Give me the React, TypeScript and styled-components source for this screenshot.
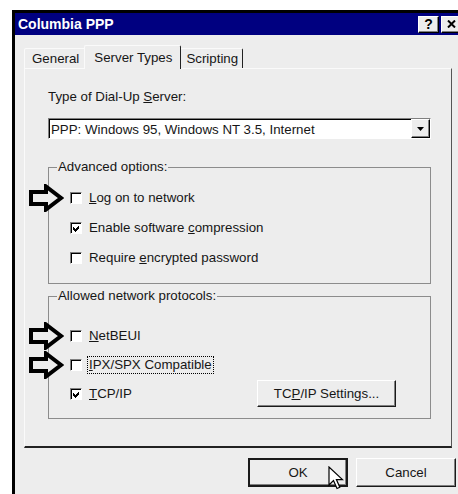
import styled, { createGlobalStyle } from "styled-components"

const GlobalStyle = createGlobalStyle`
  html, body {
    margin: 0;
    padding: 0;
    background: #fff;
    overflow: hidden;
  }
  body {
    font-family: "Liberation Sans", Arial, sans-serif;
    font-size: 13.3px;
    color: #161616;
  }
`

const face = "#ededed"

const Page = styled.div`
  padding: 10px 0 0 12px;
  width: 480px;
`

const Window = styled.div`
  width: 449px;
  height: 490px;
  border-top: 3px solid #000;
  border-left: 3px solid #000;
  background: ${face};
  display: flex;
  flex-direction: column;
`

const TitleBar = styled.div`
  height: 22px;
  flex: none;
  background: #000080;
  color: #fff;
  display: flex;
  align-items: center;
  justify-content: space-between;
  padding: 0 2px 0 3px;
  font-size: 14px;
  font-weight: bold;
`

const TitleButtons = styled.div`
  display: flex;
  gap: 2px;
`

const TitleButton = styled.div`
  width: 21px;
  height: 17px;
  box-sizing: border-box;
  background: ${face};
  color: #000;
  border-top: 1px solid #fff;
  border-left: 1px solid #fff;
  border-right: 1px solid #000;
  border-bottom: 1px solid #000;
  box-shadow: inset -1px -1px #808080;
  display: flex;
  align-items: center;
  justify-content: center;
  font-size: 14px;
  font-weight: bold;
  line-height: 1;
`

const Body = styled.div`
  padding: 10px 0 0 9px;
  display: flex;
  flex-direction: column;
`

const TabRow = styled.div`
  display: flex;
  align-items: flex-end;
  height: 23px;
`

const Tab = styled.div<{ $active?: boolean; $last?: boolean }>`
  position: relative;
  z-index: ${p => (p.$active ? 1 : 0)};
  height: ${p => (p.$active ? 24 : 20)}px;
  margin: ${p => (p.$active ? "0 -2px -1px -2px" : "0")};
  padding: ${p => (p.$active ? "0 8px 1px 9px" : p.$last ? "0 4px 0 6px" : "0 6px 0 7px")};
  box-sizing: border-box;
  display: flex;
  align-items: center;
  background: ${face};
  border-top: 1px solid #fafafa;
  border-left: 1px solid #fafafa;
  border-right: 1px solid ${p => (p.$active || p.$last ? "#222" : "transparent")};
  border-top-left-radius: 2px;
  border-top-right-radius: 2px;
`

const Panel = styled.div`
  width: 428px;
  height: 380px;
  box-sizing: border-box;
  border-top: 1px solid #fafafa;
  border-left: 1px solid #fafafa;
  border-right: 1px solid #555;
  border-bottom: 2px solid #222;
  padding: 20px 0 0 23px;
`

const FieldLabel = styled.div`
  line-height: 16px;
`

const Select = styled.div`
  margin-top: 13px;
  width: 383px;
  height: 21px;
  box-sizing: border-box;
  background: #fff;
  border-top: 1px solid #808080;
  border-left: 1px solid #808080;
  border-right: 1px solid #fff;
  border-bottom: 1px solid #fff;
  box-shadow: inset 1px 1px #000;
  display: flex;
  align-items: center;
  padding-left: 2px;
`

const SelectText = styled.span`
  flex: 1;
  padding-top: 1px;
`

const DropButton = styled.div`
  width: 19px;
  height: 19px;
  box-sizing: border-box;
  background: ${face};
  border-top: 1px solid #fff;
  border-left: 1px solid #fff;
  border-right: 1px solid #000;
  border-bottom: 1px solid #000;
  box-shadow: inset -1px -1px #808080;
  display: flex;
  align-items: center;
  justify-content: center;
`

const Group = styled.fieldset<{ $gap: number; $top: number }>`
  margin: ${p => p.$gap}px 0 0 0;
  padding: ${p => p.$top}px 0 10px 8px;
  width: 383px;
  box-sizing: border-box;
  border: 1px solid #8c8c8c;
  min-inline-size: auto;
`

const Legend = styled.legend`
  padding: 0 1px;
  line-height: 16px;
`

const Row = styled.div<{ $h: number }>`
  position: relative;
  height: ${p => p.$h}px;
  margin-left: 13px;
  display: flex;
  align-items: center;
`

const Box = styled.span`
  width: 12px;
  height: 12px;
  flex: none;
  box-sizing: border-box;
  background: #fff;
  border-top: 1px solid #808080;
  border-left: 1px solid #808080;
  border-right: 1px solid #fff;
  border-bottom: 1px solid #fff;
  box-shadow: inset 1px 1px #000;
  display: flex;
  align-items: center;
  justify-content: center;
`

const CheckText = styled.span<{ $focus?: boolean }>`
  margin-left: 6px;
  padding: 0 1px;
  line-height: 16px;
  outline: ${p => (p.$focus ? "1px dotted #000" : "none")};
`

const Marker = styled.svg`
  position: absolute;
  left: -42px;
  top: 50%;
  transform: translateY(-50%);
`

const Button = styled.div<{ $w: number; $h: number; $default?: boolean }>`
  position: relative;
  width: ${p => p.$w}px;
  height: ${p => p.$h}px;
  box-sizing: border-box;
  background: ${face};
  display: flex;
  align-items: center;
  justify-content: center;
  border: ${p => (p.$default ? "2px solid #1a1a1a" : "1px solid")};
  border-color: ${p => (p.$default ? "#1a1a1a" : "#fff #1a1a1a #1a1a1a #fff")};
  box-shadow: inset -1px -1px #808080;
`

const SettingsButton = styled(Button)`
  margin-left: auto;
  margin-right: 34px;
`

const Footer = styled.div`
  display: flex;
  justify-content: flex-end;
  gap: 8px;
  padding: 10px 8px 0 0;
`

const Pointer = styled.svg`
  position: absolute;
  left: 78px;
  top: 6px;
`

// hollow pointer drawn beside a checkbox row
const Arrow = () => (
  <Marker width="36" height="28" viewBox="0 0 36 28">
    <polygon
      points="3,8 18,8 18,2.5 33,14 18,25.5 18,20 3,20"
      fill={face}
      stroke="#000"
      strokeWidth="4"
      strokeLinejoin="miter"
    />
  </Marker>
)

const Check = () => (
  <svg width="8" height="8" viewBox="0 0 8 8" shapeRendering="crispEdges">
    <path d="M1 3h1v1h1v1h1v-1h1v-1h1v-1h1v3h-1v1h-1v1h-1v1h-1v-1h-1v-1h-1z" fill="#000" />
  </svg>
)

interface OptionProps {
  h: number
  marked?: boolean
  checked?: boolean
  focus?: boolean
  children: React.ReactNode
  extra?: React.ReactNode
}

const Option = ({ h, marked, checked, focus, children, extra }: OptionProps) => (
  <Row $h={h}>
    {marked && <Arrow />}
    <Box>{checked && <Check />}</Box>
    <CheckText $focus={focus}>{children}</CheckText>
    {extra}
  </Row>
)

export default function App() {
  return (
    <>
      <GlobalStyle />
      <Page>
        <Window>
          <TitleBar>
            <span>Columbia PPP</span>
            <TitleButtons>
              <TitleButton>?</TitleButton>
              <TitleButton>
                <svg width="9" height="8" viewBox="0 0 9 8">
                  <path d="M1 0.5L8 7.5M8 0.5L1 7.5" stroke="#000" strokeWidth="2" />
                </svg>
              </TitleButton>
            </TitleButtons>
          </TitleBar>
          <Body>
            <TabRow>
              <Tab>General</Tab>
              <Tab $active>Server Types</Tab>
              <Tab $last>Scripting</Tab>
            </TabRow>
            <Panel>
              <FieldLabel>
                Type of Dial-Up <u>S</u>erver:
              </FieldLabel>
              <Select>
                <SelectText>PPP: Windows 95, Windows NT 3.5, Internet</SelectText>
                <DropButton>
                  <svg width="7" height="4" viewBox="0 0 7 4">
                    <path d="M0 0h7L3.5 4z" fill="#000" />
                  </svg>
                </DropButton>
              </Select>
              <Group $gap={20} $top={8}>
                <Legend>Advanced options:</Legend>
                <Option h={30} marked>
                  <u>L</u>og on to network
                </Option>
                <Option h={30} checked>
                  Enable software <u>c</u>ompression
                </Option>
                <Option h={30}>
                  Require <u>e</u>ncrypted password
                </Option>
              </Group>
              <Group $gap={4} $top={17}>
                <Legend>Allowed network protocols:</Legend>
                <Option h={29} marked>
                  <u>N</u>etBEUI
                </Option>
                <Option h={29} marked focus>
                  <u>I</u>PX/SPX Compatible
                </Option>
                <Option
                  h={29}
                  checked
                  extra={
                    <SettingsButton $w={139} $h={27}>
                      TC<u>P</u>/IP Settings...
                    </SettingsButton>
                  }
                >
                  <u>T</u>CP/IP
                </Option>
              </Group>
            </Panel>
          </Body>
          <Footer>
            <Button $w={100} $h={29} $default>
              OK
              <Pointer width="16" height="26" viewBox="0 0 16 26">
                <path
                  d="M1 1V19L5.5 14.5L9 22.5L11.8 21.3L8.4 13.6H14.5Z"
                  fill="#fff"
                  stroke="#000"
                  strokeWidth="1.2"
                  strokeLinejoin="miter"
                />
              </Pointer>
            </Button>
            <Button $w={100} $h={29}>
              Cancel
            </Button>
          </Footer>
        </Window>
      </Page>
    </>
  )
}
